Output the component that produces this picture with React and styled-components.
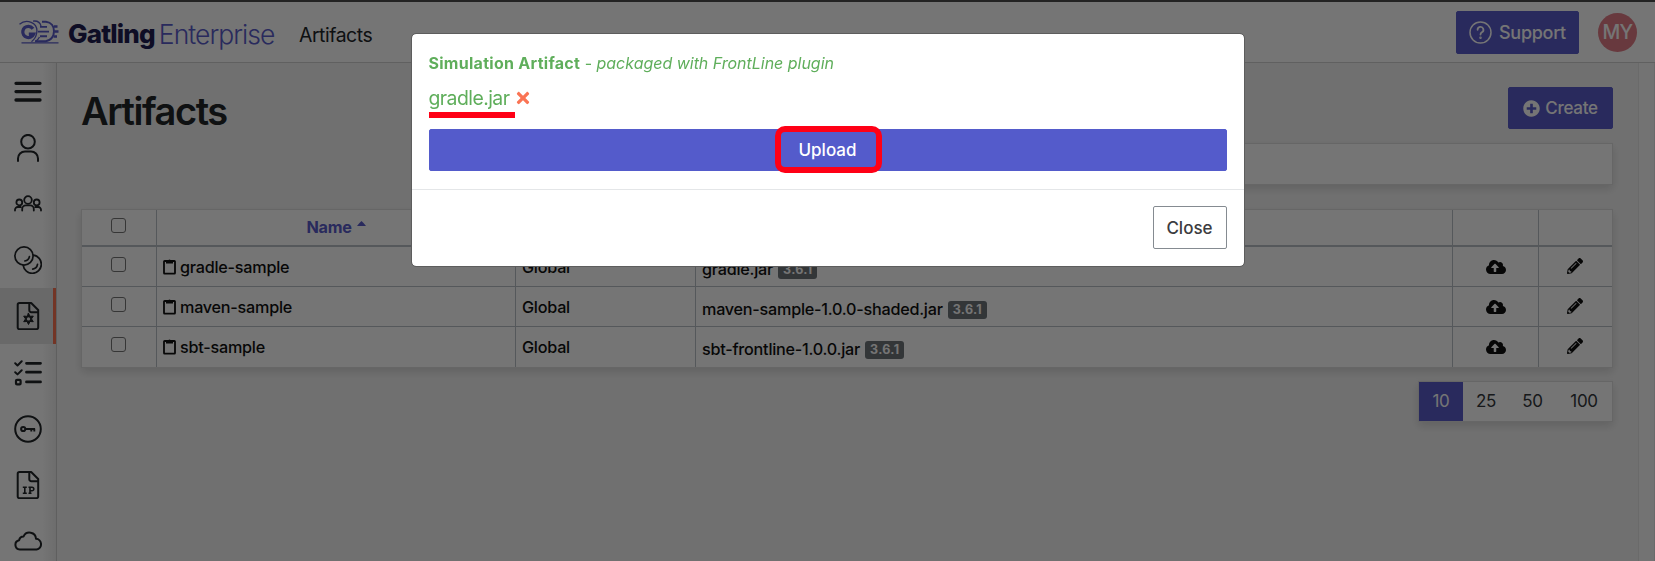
import React from "react";
import styled, { createGlobalStyle, css } from "styled-components";
import { FaPlusCircle, FaCloudUploadAlt, FaPencilAlt, FaTimes } from "react-icons/fa";

const purple = "#5a5cca";

const GlobalStyle = createGlobalStyle`
  * { box-sizing: border-box; }
  html, body { margin: 0; height: 100%; overflow: hidden; }
  body { font-family: Inter, "Liberation Sans", sans-serif; font-size: 17px; color: #212529; background: #f5f5f5; }
`;

const Page = styled.div`
  height: 561px;
  display: flex;
  flex-direction: column;
  border-top: 2px solid #4e4e4e;
`;

const Header = styled.header`
  height: 61px;
  flex: none;
  display: flex;
  align-items: center;
  background: #fff;
  border-bottom: 1px solid #d2d2d2;
  padding: 0 18px 0 19px;
`;

const Brand = styled.div`
  display: flex;
  align-items: center;
  height: 40px;
  width: 280px;
`;

const Wordmark = styled.span`
  font-size: ${(p) => p.$size}px;
  font-weight: ${(p) => p.$weight};
  color: ${(p) => p.$color};
  letter-spacing: ${(p) => p.$spacing}px;
  margin-left: ${(p) => p.$gap}px;
  margin-top: 3px;
  line-height: 30px;
`;

const Crumb = styled.span`
  font-size: 19.4px;
  font-weight: 400;
  letter-spacing: -0.45px;
  margin-top: 6px;
`;

const HeaderActions = styled.div`
  margin-left: auto;
  display: flex;
  align-items: center;
  gap: 19px;
`;

const Button = styled.button`
  display: flex;
  align-items: center;
  justify-content: center;
  gap: ${(p) => p.$gap || 6}px;
  width: ${(p) => p.$width};
  height: ${(p) => p.$height || 42}px;
  padding: 0;
  border: 1px solid ${(p) => p.$color || purple};
  border-radius: 2px;
  background: ${(p) => p.$color || purple};
  color: #fff;
  font: 500 ${(p) => p.$size || 17}px Inter, sans-serif;
  letter-spacing: ${(p) => p.$spacing || 0}px;
  ${(p) =>
    p.$outline &&
    css`
      background: #fff;
      border-color: #858b91;
      color: #3c3c40;
    `}
`;

const Avatar = styled.div`
  width: 39px;
  height: 39px;
  border-radius: 50%;
  background: #e27d87;
  color: #fff;
  display: flex;
  align-items: center;
  justify-content: center;
  font-size: 19.5px;
  font-weight: 500;
  letter-spacing: -0.6px;
`;

const Body = styled.div`
  flex: 1;
  min-height: 0;
  display: flex;
`;

const Sidebar = styled.nav`
  width: 57px;
  flex: none;
  display: flex;
  flex-direction: column;
  background: linear-gradient(90deg, #fff 75%, #ededed);
  border-right: 1px solid #cfcfcf;
  overflow: hidden;
  padding-top: 1px;
`;

const NavItem = styled.a`
  height: 56.1px;
  flex: none;
  display: flex;
  align-items: center;
  justify-content: center;
  border-right: 3px solid ${(p) => (p.$active ? "#fa7454" : "transparent")};
  background: ${(p) => (p.$active ? "#e4e4e4" : "transparent")};
  padding-left: 3px;
  color: #212529;
`;

const Main = styled.main`
  flex: 1;
  min-width: 0;
  padding: 24px 25px 0 24px;
  display: flex;
  flex-direction: column;
`;

const TitleRow = styled.div`
  display: flex;
  justify-content: space-between;
  align-items: flex-start;
  height: 42px;
`;

const Title = styled.h1`
  margin: 0;
  font-size: 38px;
  line-height: 48px;
  font-weight: 600;
  letter-spacing: -1.45px;
`;

const card = css`
  background: #fff;
  border: 1px solid #dedede;
  box-shadow: 0 4px 9px rgba(0, 0, 0, 0.13);
`;

const SearchBox = styled.div`
  ${card}
  align-self: flex-end;
  width: 700px;
  height: 42px;
  margin-top: 14px;
`;

const Table = styled.div`
  ${card}
  margin-top: 24px;
`;

const Row = styled.div`
  display: grid;
  grid-template-columns: 75px 359px 180px 757px 86px 1fr;
  height: ${(p) => p.$height}px;
  border-bottom: ${(p) => (p.$last ? 0 : p.$head ? 2 : 1)}px solid #b9c0c6;
`;

const Cell = styled.div`
  display: flex;
  align-items: ${(p) => (p.$head ? "center" : "flex-start")};
  justify-content: ${(p) => (p.$center ? "center" : "flex-start")};
  padding: ${(p) => (p.$head ? 0 : p.$top ?? 9)}px 6px 0;
  border-right: 1px solid #b9c0c6;
  gap: ${(p) => p.$gap || 5}px;
  line-height: 22px;
  font-size: 16.2px;
  font-weight: 450;
  letter-spacing: -0.24px;
  white-space: nowrap;
  color: #111;
  &:last-child { border-right: 0; }
`;

const Checkbox = styled.span`
  width: 15px;
  height: 15px;
  border: 1px solid #767676;
  border-radius: 3px;
  margin-top: ${(p) => (p.$head ? -5 : 1)}px;
  margin-right: 2px;
`;

const SortLabel = styled.span`
  color: ${purple};
  font-weight: 700;
  margin-top: -1px;
`;

const Version = styled.span`
  height: 18px;
  padding: 0 5px;
  border-radius: 3px;
  background: #6f767b;
  color: #fff;
  font-size: 12.5px;
  font-weight: 700;
  line-height: 18px;
  letter-spacing: 0.3px;
  margin-top: 3px;
`;

const Pager = styled.div`
  ${card}
  align-self: flex-end;
  display: flex;
  width: 195px;
  height: 41px;
  margin-top: 13px;
`;

const PageSize = styled.span`
  width: ${(p) => p.$width}px;
  display: flex;
  align-items: center;
  justify-content: center;
  padding-bottom: 2px;
  font-weight: 400;
  letter-spacing: -0.3px;
  background: ${(p) => (p.$active ? purple : "transparent")};
  color: ${(p) => (p.$active ? "#fff" : "#33373b")};
`;

const Gutter = styled.div`
  width: 17px;
  flex: none;
  background: #fafafa;
  border-left: 1px solid #e8e8e8;
  border-right: 1px solid #e8e8e8;
`;

const Overlay = styled.div`
  position: fixed;
  inset: 0;
  background: rgba(0, 0, 0, 0.54);
  display: flex;
  justify-content: center;
  align-items: flex-start;
  padding-top: 33px;
`;

const Dialog = styled.section`
  width: 834px;
  height: 234px;
  background: #fff;
  border: 1px solid #5d5d5d;
  background-clip: padding-box;
  border-radius: 5px;
  display: flex;
  flex-direction: column;
`;

const DialogBody = styled.div`
  height: 156px;
  padding: 18px 17px 0;
  border-bottom: 1px solid #e4e6e8;
`;

const Caption = styled.div`
  color: #5fae5b;
  font-size: 16px;
  line-height: 22px;
  white-space: nowrap;
`;

const Strong = styled.b`
  font-weight: 700;
  letter-spacing: 0.28px;
`;

const Note = styled.i`
  letter-spacing: -0.02px;
`;

const FileLine = styled.div`
  display: flex;
  align-items: center;
  gap: 4px;
  height: 26px;
  margin-top: 11px;
  color: #5fae5b;
`;

const FileName = styled.span`
  position: relative;
  font-size: 19.4px;
  width: 81px;
  letter-spacing: -0.55px;
`;

const Underline = styled.span`
  position: absolute;
  left: 0;
  top: 26px;
  width: 86px;
  height: 6px;
  background: #ff0016;
`;

const UploadArea = styled.div`
  position: relative;
  margin-top: 18px;
`;

const Highlight = styled.span`
  position: absolute;
  left: 346px;
  top: -3px;
  width: 107px;
  height: 47px;
  border: 6px solid #ff0016;
  border-radius: 10px;
`;

const DialogFooter = styled.div`
  display: flex;
  justify-content: flex-end;
  padding: 16px 17px 0;
`;

const Glyph = ({ children, width = 2 }) => (
  <svg width="28" height="28" viewBox="0 0 28 28" fill="none" stroke="currentColor" strokeWidth={width} strokeLinecap="round" strokeLinejoin="round">
    {children}
  </svg>
);

const filePath = "M5.5 1h11.700l7 7v17.400a1.800 1.800 0 0 1-1.800 1.800H5.500a1.800 1.800 0 0 1-1.800-1.800V2.800A1.800 1.800 0 0 1 5.500 1zM15.300 1.400v6.800a2 2 0 0 0 2 2h6.600";

const navIcons = {
  menu: <Glyph width={3.3}><path d="M2 5.300h24M2 13.600h24M2 22h24" /></Glyph>,
  user: <Glyph><circle cx="14" cy="7.700" r="6.800" /><path d="M4 27v-2.600a7 7 0 0 1 7-7h6a7 7 0 0 1 7 7V27" /></Glyph>,
  users: (
    <Glyph width={1.8}>
      <circle cx="14" cy="10" r="3.800" /><circle cx="5.300" cy="12.400" r="2.900" /><circle cx="22.700" cy="12.400" r="2.900" />
      <path d="M8.200 20.500v-1.600a3.600 3.600 0 0 1 3.600-3.600h4.400a3.600 3.600 0 0 1 3.600 3.600v1.600M1 20.500v-.8a2.700 2.700 0 0 1 2.700-2.700h3M27 20.500v-.8a2.700 2.700 0 0 0-2.700-2.700h-3" />
    </Glyph>
  ),
  pools: (
    <Glyph width={1.7}>
      <circle cx="10" cy="10" r="9.100" /><path d="M19.400 9.200a9.100 9.100 0 1 1-10.200 10.200" />
      <path d="M15.400 10.600a5.500 5.500 0 0 1-4.600 4.400M23.500 18.300a5.800 5.800 0 0 1-4.800 4.800" />
    </Glyph>
  ),
  artifacts: (
    <Glyph>
      <path d={filePath} />
      <path d="M14.500 11.300l1.500 3 3.300-.2-1.800 2.800 1.800 2.800-3.300-.2-1.500 3-1.500-3-3.300.2 1.800-2.800-1.800-2.800 3.300.2z" fill="currentColor" strokeWidth="1" />
      <circle cx="14.500" cy="16.900" r="1.700" fill="#e4e4e4" stroke="none" />
    </Glyph>
  ),
  tasks: (
    <Glyph width={2.8}>
      <path d="M12.500 4.300h14M12.500 13.200h14M12.500 22.900h14" />
      <path d="M1.200 4.300l2.300 2.200 4.200-4.200M1.200 13.200l2.300 2.200 4.200-4.200" strokeWidth="2" /><rect x="2" y="20.800" width="4.600" height="4.600" rx="1" strokeWidth="2.200" />
    </Glyph>
  ),
  key: (
    <Glyph><circle cx="14" cy="14" r="12.800" /><circle cx="9.200" cy="14" r="2.100" strokeWidth="2" /><path d="M11.500 14h9.600M17.300 14v2.400M20.300 14v2.400" strokeWidth="1.900" strokeLinecap="butt" /></Glyph>
  ),
  ip: (
    <Glyph><path d={filePath} /><path d="M8.800 16.200h4M10.800 16.200v6M8.800 22.200h4M14.500 16.200h3.500a1.800 1.800 0 0 1 0 3.600h-2M16 16.200v6M14.500 22.200h3" strokeWidth="1.600" strokeLinecap="butt" /></Glyph>
  ),
  cloud: (
    <Glyph><path d="M5.800 22.500a4.700 4.700 0 0 1-.6-9.300 4.400 4.400 0 0 1 4.400-3.800 6.500 6.500 0 0 1 12.400 2.400 5.400 5.400 0 0 1 .6 10.700z" /></Glyph>
  ),
};

const Logo = () => (
  <svg width="41" height="24" viewBox="0 0 41 24" fill="none" stroke={purple}>
    <path d="M.5 4.200C4 1.200 8.500.800 12.200 2.300c4.600 2 6.300 6.200 5.500 10.700-.6 4-2.600 6.600-5.200 8.700" strokeWidth="1.300" />
    <path d="M14 8.700C12.700 7 11.300 6.300 9.500 6.300a5.600 5.600 0 1 0 5 7.900H9.800" strokeWidth="3.300" />
    <path d="M14 1.100c5.500-.6 7.500 2.600 8 5M20.500 17c-1.200 2.400-2.600 3.600-4 4.600" strokeWidth="1.300" />
    <path d="M21 6.900h7M19 11.600h11M21 16.300h7" strokeWidth="1.900" />
    <path d="M23 1.700h4c5.400.6 8 4.800 8 9.500 0 5-3 9.600-8.500 10H16" strokeWidth="2" />
    <path d="M35 6.500h3.500M35.500 11.500h4M34.500 16.500H38" strokeWidth="2.500" />
    <path d="M2.500 22.800h37" strokeWidth="1.300" />
  </svg>
);

const Clipboard = () => (
  <svg width="13" height="17" viewBox="0 0 13 17">
    <rect x="1" y="3" width="11" height="12.600" rx=".6" fill="none" stroke="#111" strokeWidth="1.800" />
    <path d="M3 5.400V3h2a1.500 1.500 0 0 1 3 0h2v2.400z" fill="#111" />
  </svg>
);

const Caret = () => (
  <svg width="9" height="5" viewBox="0 0 9 5"><path d="M0 5c1.500-2 3-3.600 4.500-5C6 1.400 7.500 3 9 5z" fill={purple} /></svg>
);

const IconSlot = styled.span`
  display: flex;
  margin-top: ${(p) => p.$top}px;
  margin-right: ${(p) => p.$right || 0}px;
`;

const rows = [
  { name: "gradle-sample", file: "gradle.jar", height: 40 },
  { name: "maven-sample", file: "maven-sample-1.0.0-shaded.jar", height: 40 },
  { name: "sbt-sample", file: "sbt-frontline-1.0.0.jar", height: 40 },
];

export default function App() {
  return (
    <>
      <GlobalStyle />
      <Page>
        <Header>
          <Brand>
            <Logo />
            <Wordmark $size={26} $weight={800} $color="#1f1d52" $spacing={-0.85} $gap={8}>Gatling</Wordmark>
            <Wordmark $size={26.5} $weight={300} $color={purple} $spacing={-0.95} $gap={4}>Enterprise</Wordmark>
          </Brand>
          <Crumb>Artifacts</Crumb>
          <HeaderActions>
            <Button $width="123px" $height={43} $size={18} $gap={7} $spacing={-0.3}>
              <svg width="23" height="23" viewBox="0 0 23 23" fill="none" stroke="#fff" strokeWidth="1.5" strokeLinecap="round">
                <circle cx="11.500" cy="11.500" r="10.500" /><path d="M8.600 8.800a2.900 2.900 0 1 1 4.300 2.500c-1 .6-1.400 1.100-1.400 2.200" strokeWidth="1.800" /><circle cx="11.500" cy="16.700" r=".5" />
              </svg>
              Support
            </Button>
            <Avatar>MY</Avatar>
          </HeaderActions>
        </Header>
        <Body>
          <Sidebar>
            {Object.entries(navIcons).map(([name, icon]) => (
              <NavItem key={name} $active={name === "artifacts"}>{icon}</NavItem>
            ))}
          </Sidebar>
          <Main>
            <TitleRow>
              <Title>Artifacts</Title>
              <Button $width="105px" $spacing={-0.25} $gap={5}><FaPlusCircle size={17} />Create</Button>
            </TitleRow>
            <SearchBox />
            <Table>
              <Row $head $height={37}>
                <Cell $head $center><Checkbox $head /></Cell>
                <Cell $head $center><SortLabel>Name</SortLabel><IconSlot $top={-8}><Caret /></IconSlot></Cell>
                <Cell $head /><Cell $head /><Cell $head /><Cell $head />
              </Row>
              {rows.map((r, i) => (
                <Row key={r.name} $height={r.height} $last={i === 2}>
                  <Cell $center><Checkbox /></Cell>
                  <Cell $gap={4}><IconSlot $top={2}><Clipboard /></IconSlot>{r.name}</Cell>
                  <Cell>Global</Cell>
                  <Cell $top={11}>{r.file}<Version>3.6.1</Version></Cell>
                  <Cell $center><IconSlot $top={1}><FaCloudUploadAlt size={20} /></IconSlot></Cell>
                  <Cell $center><IconSlot $top={2} $right={1}><FaPencilAlt size={16} /></IconSlot></Cell>
                </Row>
              ))}
            </Table>
            <Pager>
              <PageSize $active $width={44}>10</PageSize>
              <PageSize $width={46}>25</PageSize>
              <PageSize $width={47}>50</PageSize>
              <PageSize $width={56}>100</PageSize>
            </Pager>
          </Main>
          <Gutter />
        </Body>
      </Page>
      <Overlay>
        <Dialog>
          <DialogBody>
            <Caption><Strong>Simulation Artifact</Strong> - <Note>packaged with FrontLine plugin</Note></Caption>
            <FileLine>
              <FileName>gradle.jar<Underline /></FileName>
              <FaTimes size={18} color="#fa7454" />
            </FileLine>
            <UploadArea>
              <Button $width="100%" $color="#545bcb">Upload</Button>
              <Highlight />
            </UploadArea>
          </DialogBody>
          <DialogFooter>
            <Button $outline $width="74px" $height={43}>Close</Button>
          </DialogFooter>
        </Dialog>
      </Overlay>
    </>
  );
}
